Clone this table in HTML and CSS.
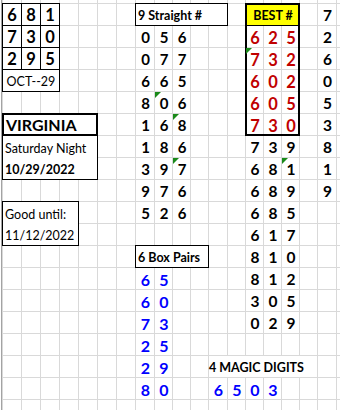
FILE: index.html
```html
<!DOCTYPE html>
<html>
<head>
<meta charset="utf-8">
<link rel="stylesheet" href="styles.css">
</head>
<body>
<div class="sheet">
  <div class="lines"><i></i><i></i><i></i><i></i><i></i><i></i><i></i><i></i><i></i><i></i><i></i><i></i><i></i><i></i><i></i><i></i><i></i><i></i><i></i><i></i></div>

  <div class="blk b681">
    <span class="d">6</span><span class="d">8</span><span class="d">1</span>
    <span class="d">7</span><span class="d">3</span><span class="d">0</span>
    <span class="d">2</span><span class="d">9</span><span class="d">5</span>
  </div>
  <div class="box oct">OCT--29</div>

  <div class="box label straight-h">9 Straight #</div>
  <div class="blk straight">
    <span class="d">0</span><span class="d">5</span><span class="d">6</span>
    <span class="d">0</span><span class="d">7</span><span class="d">7</span>
    <span class="d">6</span><span class="d">6</span><span class="d">5</span>
    <span class="d">8</span><span class="d flag">0</span><span class="d">6</span>
    <span class="d">1</span><span class="d">6</span><span class="d flag">8</span>
    <span class="d">1</span><span class="d">8</span><span class="d">6</span>
    <span class="d">3</span><span class="d">9</span><span class="d flag">7</span>
    <span class="d">9</span><span class="d">7</span><span class="d">6</span>
    <span class="d">5</span><span class="d">2</span><span class="d">6</span>
  </div>

  <div class="best-h">BEST #</div>
  <div class="blk red">
    <span class="d">6</span><span class="d">2</span><span class="d">5</span>
    <span class="d flag">7</span><span class="d">3</span><span class="d">2</span>
    <span class="d">6</span><span class="d">0</span><span class="d">2</span>
    <span class="d">6</span><span class="d">0</span><span class="d">5</span>
    <span class="d">7</span><span class="d">3</span><span class="d">0</span>
  </div>
  <div class="best-box"></div>
  <div class="blk best-list">
    <span class="d">7</span><span class="d">3</span><span class="d">9</span>
    <span class="d">6</span><span class="d">8</span><span class="d flag">1</span>
    <span class="d">6</span><span class="d">8</span><span class="d">9</span>
    <span class="d">6</span><span class="d">8</span><span class="d">5</span>
    <span class="d">6</span><span class="d">1</span><span class="d">7</span>
    <span class="d">8</span><span class="d">1</span><span class="d">0</span>
    <span class="d">8</span><span class="d">1</span><span class="d">2</span>
    <span class="d">3</span><span class="d">0</span><span class="d">5</span>
    <span class="d">0</span><span class="d">2</span><span class="d">9</span>
  </div>

  <div class="blk right">
    <span class="d">7</span><span class="d">2</span><span class="d">6</span><span class="d">0</span><span class="d">5</span><span class="d">3</span><span class="d">8</span><span class="d">1</span><span class="d">9</span>
  </div>

  <div class="virginia">VIRGINIA</div>
  <div class="box stack sat-box">
    <span class="line">Saturday Night</span>
    <span class="line bold">10/29/2022</span>
  </div>
  <div class="box stack good-box">
    <span class="line">Good until:</span>
    <span class="line">11/12/2022</span>
  </div>

  <div class="box label pairs-h">6 Box Pairs</div>
  <div class="blk pairs">
    <span class="d">6</span><span class="d">5</span>
    <span class="d">6</span><span class="d">0</span>
    <span class="d">7</span><span class="d">3</span>
    <span class="d">2</span><span class="d">5</span>
    <span class="d">2</span><span class="d">9</span>
    <span class="d">8</span><span class="d">0</span>
  </div>

  <div class="magic-h">4 MAGIC DIGITS</div>
  <div class="blk magic">
    <span class="d">6</span><span class="d">5</span><span class="d">0</span><span class="d">3</span>
  </div>
</div>
</body>
</html>
```

FILE: styles.css
```css
:root {
  --cols: 1px repeat(8, 19px) 18px 18px 18px 19px 18px 18px 18px 18px 18px 19px 19px;
  --grid: #d9d9d9;
}

* { box-sizing: border-box; }

html, body {
  margin: 0;
  padding: 0;
  background: #fff;
  overflow: hidden;
}

body {
  width: 340px;
  height: 410px;
  font-family: Lato, "Open Sans", sans-serif;
  color: #000;
}

.sheet {
  margin-left: 1px;
  border-left: 1px solid #a3a3a3;
  display: grid;
  grid-template-columns: var(--cols);
  grid-template-rows: 4px repeat(19, 22px);
  width: max-content;
}

.lines {
  grid-area: 1 / 1 / -1 / -1;
  display: grid;
  grid-template-columns: var(--cols);
  background-image: linear-gradient(to bottom, transparent 21px, var(--grid) 21px);
  background-size: 100% 22px;
  background-position: 0 4px;
}

.lines > i { border-right: 1px solid var(--grid); }

/* digit blocks */
.blk {
  display: grid;
  grid-auto-rows: 22px;
}

.d {
  display: flex;
  align-items: center;
  justify-content: center;
  font-weight: 700;
  position: relative;
}

.flag::before {
  content: "";
  position: absolute;
  left: 0;
  top: 0;
  border-style: solid;
  border-width: 6px 6px 0 0;
  border-color: #1a8a1a transparent transparent transparent;
}

.b681 {
  grid-column: 2 / span 3;
  grid-row: 2 / span 3;
  grid-template-columns: 19px 19px 19px;
  font-size: 16.5px;
}

.b681 .d {
  border: 1px solid #000;
  margin: -1px 0 0 -1px;
}

.straight {
  grid-column: 9 / span 3;
  grid-row: 3 / span 9;
  grid-template-columns: 19px 18px 18px;
  font-size: 15px;
}

.red {
  grid-column: 15 / span 3;
  grid-row: 3 / span 5;
  grid-template-columns: 18px 18px 18px;
  font-size: 16.5px;
  color: #c00000;
}

.red .d { padding-top: 2px; }

.best-list {
  grid-column: 15 / span 3;
  grid-row: 8 / span 9;
  grid-template-columns: 18px 18px 18px;
  font-size: 15.5px;
}

.right {
  grid-column: 19;
  grid-row: 2 / span 9;
  font-size: 15.5px;
}

.pairs {
  grid-column: 9 / span 2;
  grid-row: 14 / span 6;
  grid-template-columns: 19px 18px;
  font-size: 16px;
  color: #0000ff;
}

.magic {
  grid-column: 13 / span 4;
  grid-row: 19;
  grid-template-columns: 19px 18px 18px 18px;
  font-size: 16px;
  color: #0000ff;
}

/* boxes and labels */
.box {
  border: 1px solid #000;
  margin: -1px 0 0 -1px;
  background: #fff;
  font-size: 12.5px;
}

.oct {
  grid-column: 2 / span 3;
  grid-row: 5;
  display: flex;
  align-items: center;
  justify-content: center;
  padding-top: 2px;
}

.label {
  display: flex;
  align-items: center;
  padding: 1px 0 0 2px;
  font-weight: 700;
}

.straight-h {
  grid-column: 9 / span 5;
  grid-row: 2;
}

.pairs-h {
  grid-column: 9 / span 4;
  grid-row: 13;
}

.best-h {
  grid-column: 15 / span 3;
  grid-row: 2;
  background: #ffff00;
  border-bottom: 1px solid #000;
  display: flex;
  align-items: center;
  justify-content: center;
  padding-top: 2px;
  font-size: 12.5px;
  font-weight: 700;
}

.best-box {
  grid-column: 15 / span 3;
  grid-row: 2 / span 6;
  border: 2px solid #000;
  margin: -1px 0 0 -1px;
}

.virginia {
  grid-column: 2 / span 5;
  grid-row: 7;
  border: 2px solid #000;
  margin: -1px 0 0 -1px;
  background: #fff;
  display: flex;
  align-items: center;
  padding: 0 0 1px 2px;
  font-size: 16px;
  font-weight: 700;
}

.stack {
  display: flex;
  flex-direction: column;
}

.line {
  flex: 1;
  display: flex;
  align-items: center;
  padding: 3px 0 0 2px;
}

.bold { font-weight: 700; }

.sat-box {
  grid-column: 2 / span 5;
  grid-row: 8 / span 2;
}

.good-box {
  grid-column: 2 / span 4;
  grid-row: 11 / span 2;
}

.magic-h {
  grid-column: 13 / span 6;
  grid-row: 18;
  margin: 0 1px 1px 0;
  background: #fff;
  display: flex;
  align-items: center;
  padding-top: 2px;
  font-size: 12.5px;
  font-weight: 700;
}
```
